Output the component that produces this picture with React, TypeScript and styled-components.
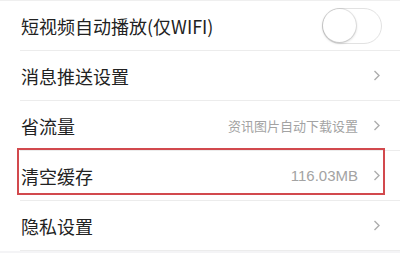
import React from 'react';
import styled, { createGlobalStyle } from 'styled-components';

const GlobalStyle = createGlobalStyle`
  html, body {
    margin: 0;
    padding: 0;
    background: #f4f4f6;
  }
  body {
    font-family: 'Noto Sans CJK SC', 'Noto Sans', sans-serif;
  }
`;

const List = styled.div`
  width: 400px;
  background: #fff;
  border-top: 1px solid #efefef;
`;

const Row = styled.div`
  position: relative;
  display: flex;
  align-items: center;
  height: 49px;
  margin-left: 20px;
  padding-right: 19px;
  border-bottom: 1px solid #ececec;
`;

const Label = styled.span`
  flex: 1;
  padding-left: 1px;
  font-size: 18px;
  color: #222;
`;

const Hint = styled.span<{ $size?: number }>`
  margin-right: 15px;
  font-size: ${(p) => p.$size ?? 13}px;
  color: #a3a3a3;
  font-family: ${(p) => (p.$size ? "'Liberation Sans', 'Noto Sans CJK SC', sans-serif" : "'Noto Sans CJK SC', sans-serif")};
`;

const Toggle = styled.div`
  position: relative;
  width: 58px;
  height: 34px;
  margin-right: -1px;
  border: 1px solid #e2e2e2;
  border-radius: 18px;
  background: #fff;
`;

const Knob = styled.div`
  position: absolute;
  top: 0;
  left: 0;
  width: 33px;
  height: 33px;
  border-radius: 50%;
  background: #fff;
  box-shadow: 0 1px 3px rgba(0, 0, 0, 0.22), 0 0 0 1px rgba(0, 0, 0, 0.08);
`;

const Highlight = styled.div`
  position: absolute;
  top: -3px;
  bottom: 5px;
  left: -3px;
  right: 15px;
  border: 2px solid #d2494d;
  pointer-events: none;
`;

const Chevron = () => (
  <svg width="8" height="11" viewBox="0 0 8 11">
    <path d="M1.5 1 L6 5.5 L1.5 10" fill="none" stroke="#adadad" strokeWidth="1.4" />
  </svg>
);

export default function App() {
  return (
    <>
      <GlobalStyle />
      <List>
        <Row>
          <Label>短视频自动播放(仅WIFI)</Label>
          <Toggle>
            <Knob />
          </Toggle>
        </Row>
        <Row>
          <Label>消息推送设置</Label>
          <Chevron />
        </Row>
        <Row>
          <Label>省流量</Label>
          <Hint>资讯图片自动下载设置</Hint>
          <Chevron />
        </Row>
        <Row>
          <Label>清空缓存</Label>
          <Hint $size={15}>116.03MB</Hint>
          <Chevron />
          <Highlight />
        </Row>
        <Row>
          <Label>隐私设置</Label>
          <Chevron />
        </Row>
      </List>
    </>
  );
}
